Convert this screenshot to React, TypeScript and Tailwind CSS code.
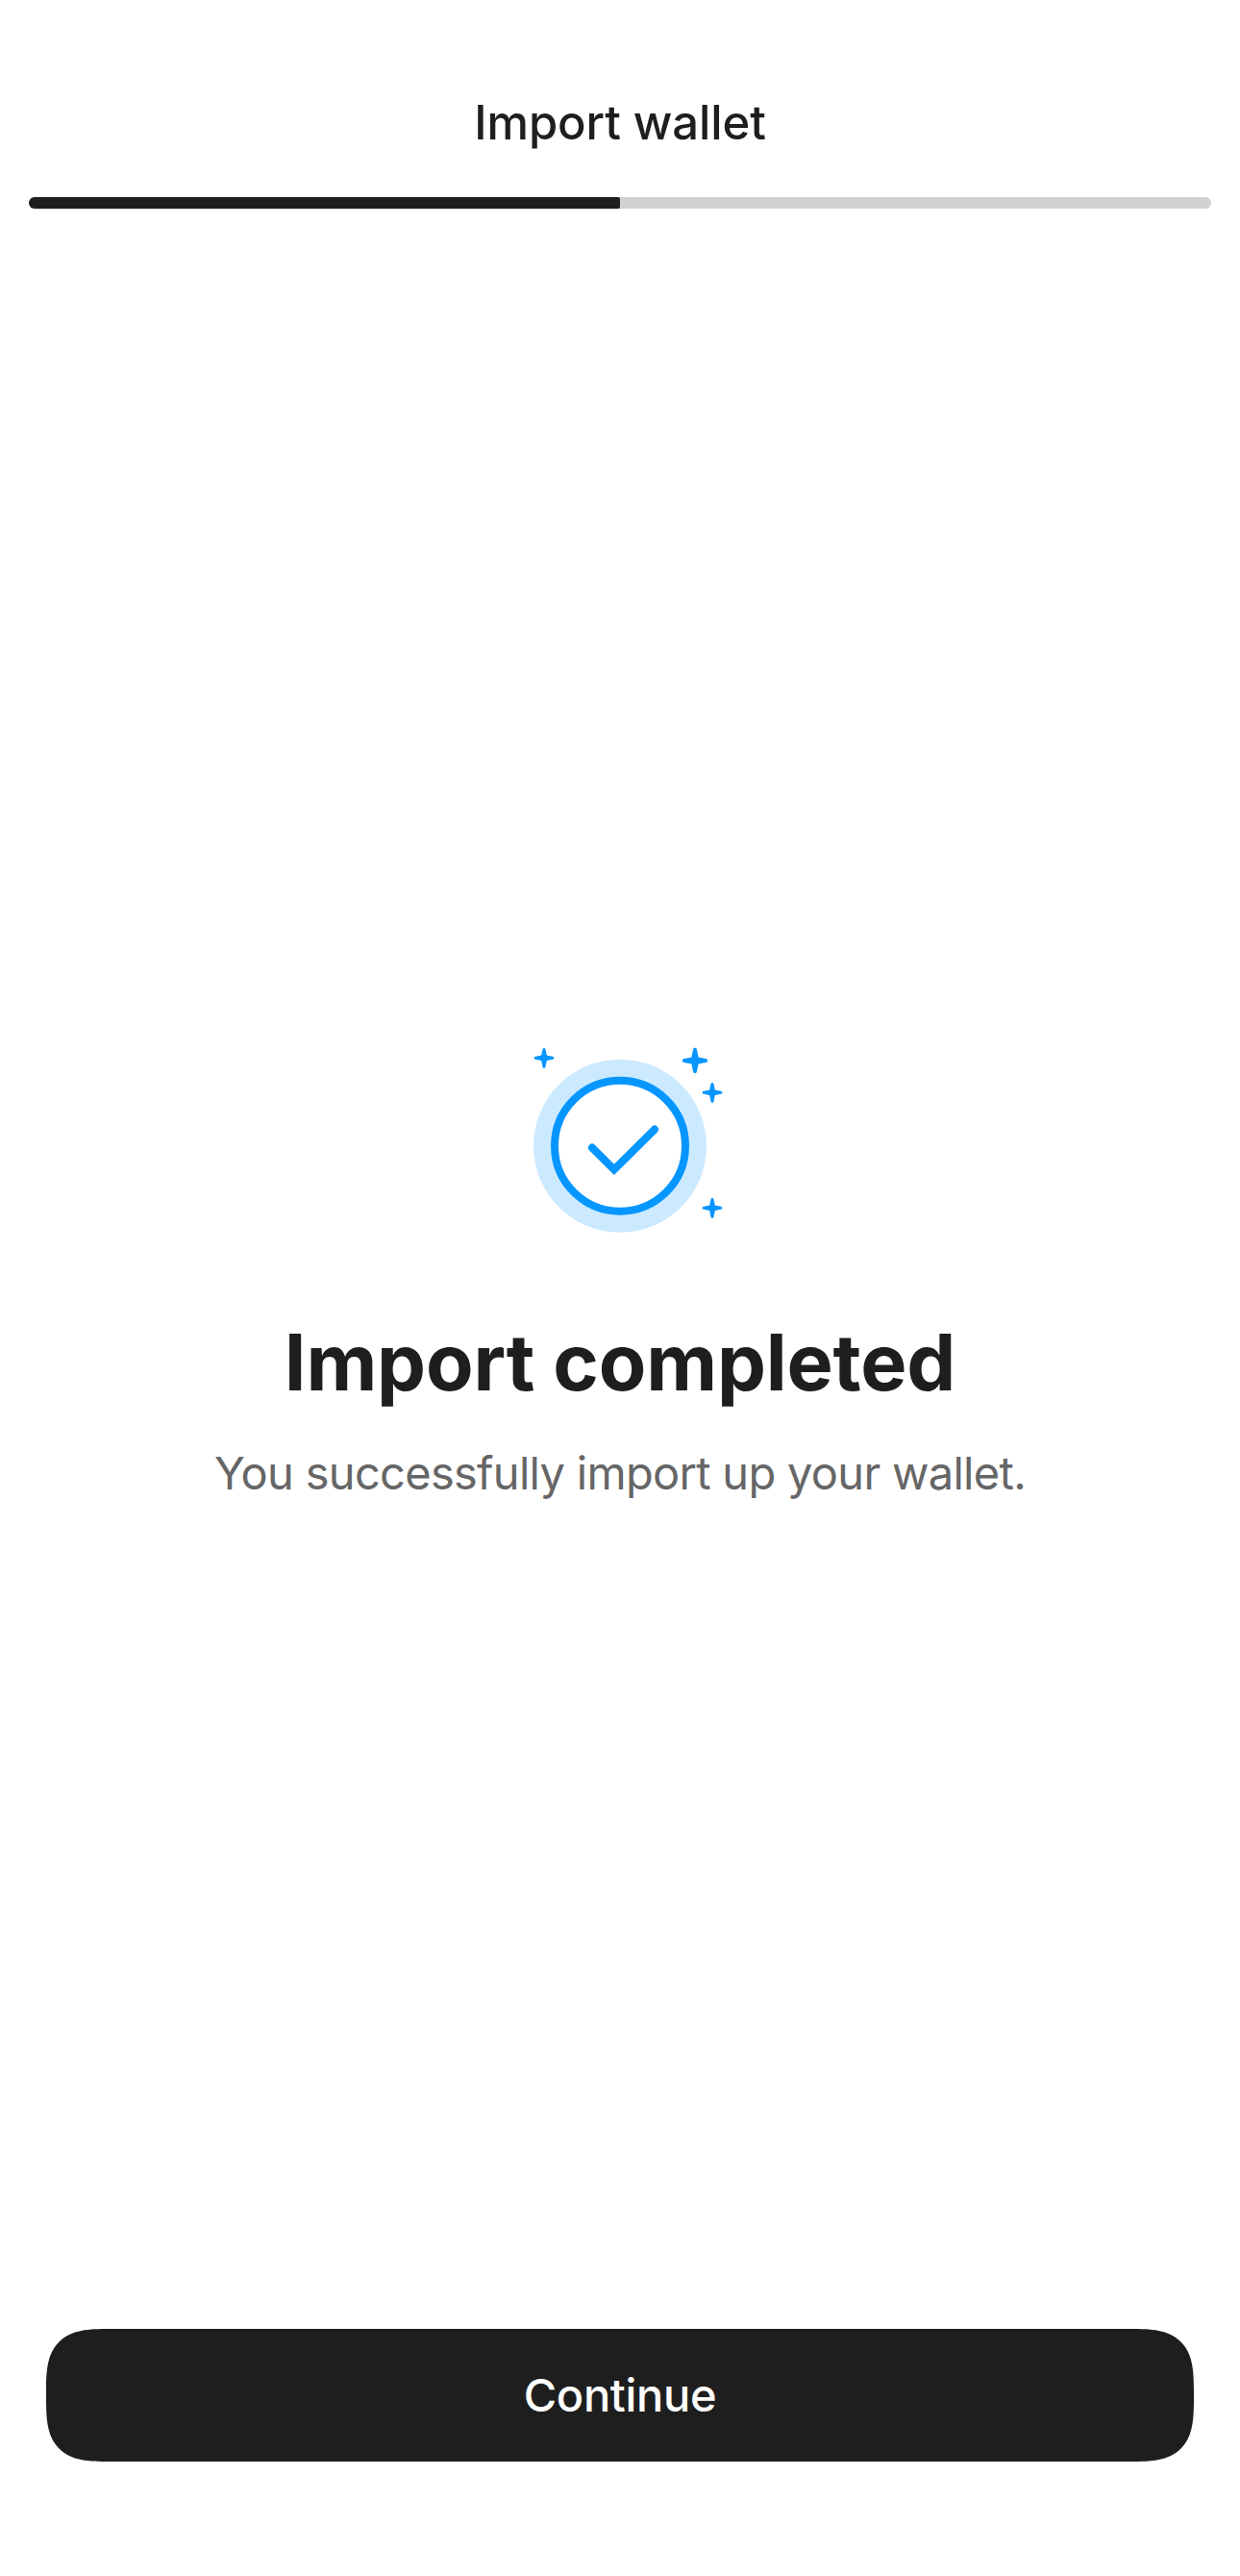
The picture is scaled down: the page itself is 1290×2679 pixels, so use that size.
import React from 'react';

type StarProps = {
  x: number;
  y: number;
  size: number;
};

const Star = ({ x, y, size }: StarProps) => (
  <path
    transform={`translate(${x} ${y}) scale(${size / 10})`}
    d="M0 -10C0.8 -10 1.3 -9.5 1.5 -8.5L2.7 -2.7L8.5 -1.5C9.5 -1.3 10 -0.8 10 0S9.5 1.3 8.5 1.5L2.7 2.7L1.5 8.5C1.3 9.5 0.8 10 0 10S-1.3 9.5 -1.5 8.5L-2.7 2.7L-8.5 1.5C-9.5 1.3 -10 0.8 -10 0S-9.5 -1.3 -8.5 -1.5L-2.7 -2.7L-1.5 -8.5C-1.3 -9.5 -0.8 -10 0 -10Z"
    fill="#0596ff"
  />
);

const SuccessIcon = () => (
  <svg width="230" height="220" viewBox="0 0 230 220" fill="none">
    <circle cx="105" cy="116.7" r="90" fill="#cceaff" />
    <circle cx="105" cy="116.7" r="68" fill="white" stroke="#0596ff" strokeWidth="8" />
    <path
      d="M76 118.6L98.9 141.3L141 99.6"
      stroke="#0596ff"
      strokeWidth="8"
      strokeLinecap="round"
    />
    <Star x={26} y={25.3} size={10.4} />
    <Star x={183} y={28} size={13.2} />
    <Star x={201} y={61.3} size={10.4} />
    <Star x={201} y={181.3} size={10.4} />
  </svg>
);

const App = () => {
  const progress = 50;

  return (
    <div className="flex h-[2679px] w-full flex-col bg-white font-['Inter',sans-serif] text-[#1e1e1e]">
      <header className="px-[30px] pt-[98px]">
        <h1 className="text-center text-[49px] leading-[60px] font-medium tracking-[-0.1px]">
          Import wallet
        </h1>
        <div className="mt-[47px] h-3 overflow-hidden rounded-full bg-[#d1d1d1]">
          <div className="h-full rounded-r-xs bg-[#1e1e1e]" style={{ width: `${progress}%` }} />
        </div>
      </header>

      <main className="flex flex-1 flex-col items-center pt-[858px]">
        <div className="pl-5">
          <SuccessIcon />
        </div>
        <h2 className="mt-[73px] text-[81px] leading-[98px] font-bold tracking-[-0.2px]">
          Import completed
        </h2>
        <p className="mt-[37px] text-[47px] leading-[58px] tracking-[-0.7px] text-[#666666]">
          You successfully import up your wallet.
        </p>
      </main>

      <footer className="px-12 pb-[119px]">
        <button className="h-[138px] w-full rounded-[66px] bg-[#1e1e1e] text-[47px] font-medium tracking-[-0.3px] text-white [corner-shape:superellipse(1.6)]">
          Continue
        </button>
      </footer>
    </div>
  );
};

export default App;
